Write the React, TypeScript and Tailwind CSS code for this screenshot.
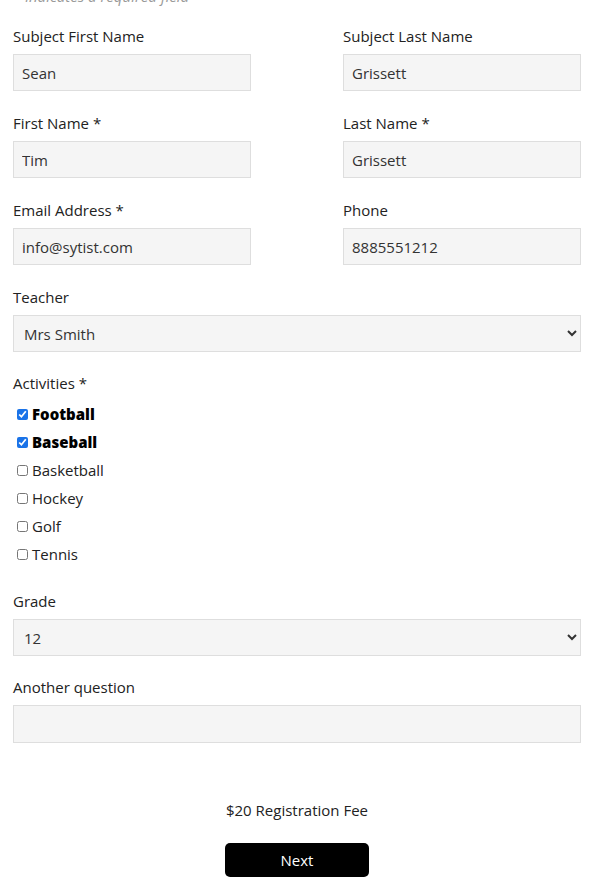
import React from 'react';

const font = { fontFamily: '"Open Sans", "Liberation Sans", Arial, sans-serif' };

const Field = ({ label, value }: { label: string; value: string }) => (
  <div className="flex flex-col">
    <label className="text-[15px] leading-[22px] text-[#222] mb-[7px]">{label}</label>
    <input
      readOnly
      value={value}
      className="h-[37px] bg-[#f5f5f5] border border-[#dedede] px-[8px] text-[15px] text-[#333] outline-none"
    />
  </div>
);

const activities = [
  { name: 'Football', checked: true },
  { name: 'Baseball', checked: true },
  { name: 'Basketball', checked: false },
  { name: 'Hockey', checked: false },
  { name: 'Golf', checked: false },
  { name: 'Tennis', checked: false },
];

export default function App() {
  return (
    <div className="flow-root w-[606px] h-[896px] overflow-hidden bg-white pl-[13px] pr-[25px] text-[#222]" style={font}>
      <p className="-mt-[15px] text-[15px] leading-[22px] italic text-[#999]">* indicates a required field</p>

      <div className="mt-[18px] grid grid-cols-[238px_238px] justify-between gap-y-[21px]">
        <Field label="Subject First Name" value="Sean" />
        <Field label="Subject Last Name" value="Grissett" />
        <Field label="First Name *" value="Tim" />
        <Field label="Last Name *" value="Grissett" />
        <Field label="Email Address *" value="info@sytist.com" />
        <Field label="Phone" value="8885551212" />
      </div>

      <div className="mt-[21px] flex flex-col">
        <label className="text-[15px] leading-[22px] mb-[7px]">Teacher</label>
        <select className="h-[37px] bg-[#f5f5f5] border border-[#dedede] px-[6px] text-[15px] text-[#333]" defaultValue="Mrs Smith">
          <option>Mrs Smith</option>
        </select>
      </div>

      <div className="mt-[20px]">
        <div className="text-[15px] leading-[22px]">Activities *</div>
        <div className="mt-[6px] flex flex-col">
          {activities.map((a) => (
            <label key={a.name} className="h-[28px] flex items-center pl-[4px]">
              <input type="checkbox" defaultChecked={a.checked} className="w-[11px] h-[11px] mr-[4px] accent-[#1a73e8]" />
              <span className={`text-[15px] ${a.checked ? 'font-extrabold text-black' : 'text-[#222]'}`}>{a.name}</span>
            </label>
          ))}
        </div>
      </div>

      <div className="mt-[22px] flex flex-col">
        <label className="text-[15px] leading-[22px] mb-[7px]">Grade</label>
        <select className="h-[37px] bg-[#f5f5f5] border border-[#dedede] px-[6px] text-[15px] text-[#333]" defaultValue="12">
          <option>12</option>
        </select>
      </div>

      <div className="mt-[20px] flex flex-col">
        <label className="text-[15px] leading-[22px] mb-[7px]">Another question</label>
        <input readOnly className="h-[38px] bg-[#f5f5f5] border border-[#dedede] outline-none" />
      </div>

      <div className="mt-[56px] text-center text-[15px] leading-[22px] text-[#222]">$20 Registration Fee</div>
      <div className="mt-[22px] flex justify-center">
        <button className="w-[144px] h-[34px] rounded-[5px] bg-black text-white text-[15px]">Next</button>
      </div>
    </div>
  );
}
